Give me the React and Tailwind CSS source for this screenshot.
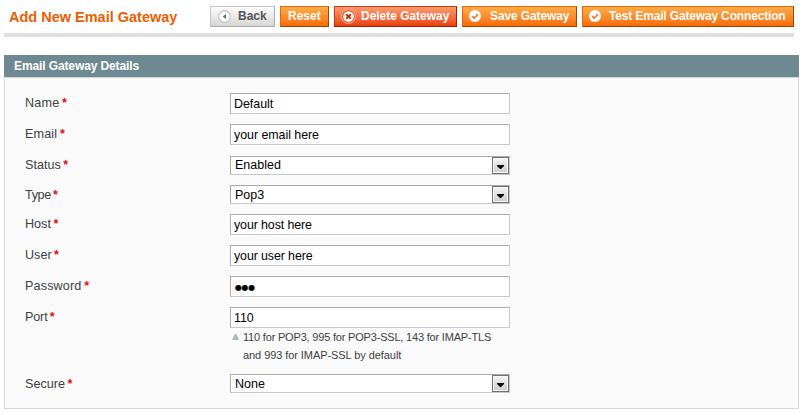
function BackIcon() {
  return (
    <svg width="13" height="13" viewBox="0 0 13 13" className="block shrink-0">
      <circle cx="6.5" cy="6.5" r="5.8" fill="#fdfdfd" stroke="#c3c3c3" strokeWidth="1.2" />
      <path d="M8 4v5L4.6 6.5z" fill="#707070" />
    </svg>
  );
}

function DeleteIcon() {
  return (
    <svg width="15" height="15" viewBox="0 0 15 15" className="mb-px block shrink-0">
      <circle cx="7.5" cy="7.5" r="6.9" fill="#e0552a" stroke="#fbb79c" strokeWidth="1" />
      <circle cx="7.5" cy="7.5" r="5.3" fill="#fff" />
      <path d="M5.2 5.2l4.6 4.6M9.8 5.2l-4.6 4.6" stroke="#b8350c" strokeWidth="2" />
    </svg>
  );
}

function CheckIcon() {
  return (
    <svg width="12" height="12" viewBox="0 0 12 12" className="mb-px block shrink-0">
      <circle cx="6" cy="6" r="6" fill="#fff" />
      <path d="M3.3 6.2l1.9 2L8.9 4" fill="none" stroke="#ea7a26" strokeWidth="1.7" />
    </svg>
  );
}

const ORANGE =
  "border-t-[#ed6502] border-l-[#ed6502] border-r-[#a04300] border-b-[#a04300] bg-linear-to-b from-[#ffac47] to-[#f76b00] text-white";
const RED =
  "border-t-[#c93c06] border-l-[#c93c06] border-r-[#a92000] border-b-[#a92000] bg-linear-to-b from-[#ff9a6c] to-[#e63f04] text-white";
const GRAY =
  "border-t-[#c4c4c4] border-l-[#c4c4c4] border-r-[#aaa] border-b-[#aaa] bg-linear-to-b from-[#fcfcfc] to-[#d6d6d6] text-[#555]";

function Button({ tone, className, icon, children }) {
  return (
    <button
      className={`flex h-[21px] shrink-0 items-center border text-[12px] leading-[18px] font-bold whitespace-nowrap ${tone} ${className}`}
    >
      {icon}
      <span className="block pb-px">{children}</span>
    </button>
  );
}

function Field({ label, labelClass = "pt-px", children }) {
  return (
    <div className="flex items-start">
      <div className="w-[205px] shrink-0 text-[12.6px] leading-[19px] text-[#3c4043]">
        <div className={labelClass}>
          {label} <span className="-ml-px font-bold tracking-normal text-[#dd1111]">*</span>
        </div>
      </div>
      {children}
    </div>
  );
}

function TextBox({ className = "", children }) {
  return (
    <div
      className={`h-[21px] w-[280px] border border-t-[#aaa] border-r-[#c8c8c8] border-b-[#c8c8c8] border-l-[#aaa] bg-white pl-[3px] text-[12.4px] leading-[20px] text-black ${className}`}
    >
      {children}
    </div>
  );
}

function SelectBox({ textClass = "pt-0.5", children }) {
  return (
    <div className="flex h-[19px] w-[280px] items-center justify-between border border-t-[#aaa] border-r-[#c8c8c8] border-b-[#c8c8c8] border-l-[#aaa] bg-white pl-1 text-[12.5px] leading-[17px] text-black">
      <span className={textClass}>{children}</span>
      <span className="flex size-[17px] items-center justify-center border border-[#707070] bg-linear-to-b from-[#f4f4f4] to-[#cdcdcd] pt-[3px] shadow-[inset_0_0_0_1px_#f8f8f8]">
        <svg width="7" height="4" viewBox="0 0 7 4" className="block">
          <path d="M0 0h7v1L4 4H3L0 1z" fill="#000" />
        </svg>
      </span>
    </div>
  );
}

export default function App() {
  return (
    <div className="h-[413px] w-[806px] overflow-hidden bg-white pt-1.5 pl-1 font-['Liberation_Sans',Arial,sans-serif]">
      <header className="flex h-[31px] w-[790px] border-b-4 border-[#dfdfdf] pl-[5px]">
        <h1 className="w-[201px] shrink-0 pt-px text-[14.5px] leading-[21px] font-bold whitespace-nowrap text-[#eb5e00]">
          Add New Email Gateway
        </h1>
        <div className="flex gap-[5px]">
          <Button tone={GRAY} className="w-[65px] gap-[7px] pl-[7px]" icon={<BackIcon />}>
            Back
          </Button>
          <Button tone={ORANGE} className="w-[49px] pl-[7px]">
            Reset
          </Button>
          <Button tone={RED} className="w-[123px] gap-[5px] pl-[6px] tracking-[-0.03px]" icon={<DeleteIcon />}>
            Delete Gateway
          </Button>
          <Button tone={ORANGE} className="w-[115px] gap-[9px] pl-[6px] tracking-[-0.12px]" icon={<CheckIcon />}>
            Save Gateway
          </Button>
          <Button tone={ORANGE} className="w-[212px] gap-[8px] pl-[6px] tracking-[-0.16px]" icon={<CheckIcon />}>
            Test Email Gateway Connection
          </Button>
        </div>
      </header>

      <section className="mt-[18px] w-[795px]">
        <h2 className="h-[22px] bg-[#6f8992] pl-2.5 text-[12px] leading-[22px] font-bold tracking-[-0.11px] text-white">
          Email Gateway Details
        </h2>
        <div className="flex h-[332px] flex-col gap-2.5 border border-[#d6d6d6] bg-[#fafafa] pt-[15px] pl-5">
          <Field label="Name" labelClass="pt-px tracking-[0.2px]">
            <TextBox>Default</TextBox>
          </Field>
          <Field label="Email" labelClass="pt-px tracking-[0.15px]">
            <TextBox className="tracking-[-0.03px]">your email here</TextBox>
          </Field>
          <div className="pt-px">
            <Field label="Status" labelClass="pt-0">
              <SelectBox textClass="pt-0">Enabled</SelectBox>
            </Field>
          </div>
          <div className="h-[19px]">
            <Field label="Type" labelClass="pt-px tracking-[-0.35px]">
              <SelectBox>Pop3</SelectBox>
            </Field>
          </div>
          <Field label="Host">
            <TextBox className="tracking-[-0.1px]">your host here</TextBox>
          </Field>
          <Field label="User">
            <TextBox className="tracking-[-0.1px]">your user here</TextBox>
          </Field>
          <Field label="Password" labelClass="pt-px tracking-[0.15px]">
            <TextBox>
              <span className="block pl-px font-['DejaVu_Sans',sans-serif] text-[8px] leading-[21px] tracking-[-0.4px]">
                ●●●
              </span>
            </TextBox>
          </Field>
          <Field label="Port" labelClass="pt-px tracking-[-0.15px]">
            <div>
              <TextBox>110</TextBox>
              <p className="flex h-9 w-[280px] pl-0.5 text-[11px] leading-[18px] text-[#3c4043]">
                <svg width="7" height="6" viewBox="0 0 7 6" className="mt-1.5 mr-1 block shrink-0">
                  <path d="M2.8 0h1.4L7 6H0z" fill="#a9b8bc" />
                </svg>
                <span>
                  <span className="block tracking-[-0.19px]">110 for POP3, 995 for POP3-SSL, 143 for IMAP-TLS</span>
                  <span className="block tracking-[-0.07px]">and 993 for IMAP-SSL by default</span>
                </span>
              </p>
            </div>
          </Field>
          <Field label="Secure">
            <SelectBox>None</SelectBox>
          </Field>
        </div>
      </section>
    </div>
  );
}
